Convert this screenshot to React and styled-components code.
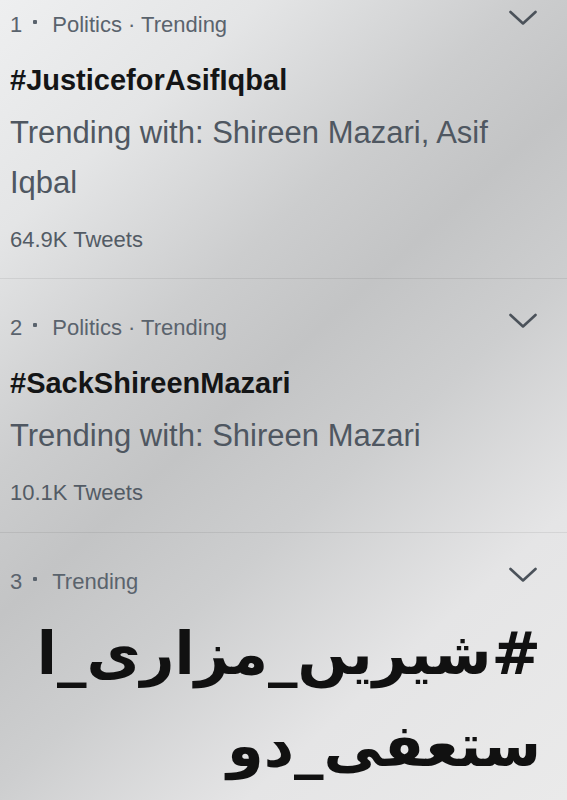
import React from "react";
import styled, { createGlobalStyle } from "styled-components";

const Global = createGlobalStyle`
  html, body { margin: 0; padding: 0; }
  body {
    width: 567px;
    min-height: 800px;
    font-family: "Liberation Sans", Arial, sans-serif;
    background: linear-gradient(138deg, #eeeff0 0%, #e4e5e6 18%, #cccdce 36%, #c3c4c5 47%, #cdcecf 60%, #e5e5e6 78%, #eaeaea 100%);
    background-attachment: fixed;
  }
`;

const Page = styled.div`
  width: 567px;
  height: 800px;
  overflow: hidden;
  display: flex;
  flex-direction: column;
`;

const Row = styled.section`
  display: flex;
  flex-direction: column;
  padding: ${(p) => p.$top}px 30px ${(p) => p.$bottom}px 10px;
  border-bottom: ${(p) => (p.$last ? "none" : "1px solid rgba(0,0,0,0.07)")};
`;

const Header = styled.div`
  display: flex;
  justify-content: space-between;
  align-items: flex-start;
`;

const Meta = styled.div`
  display: flex;
  align-items: center;
  font-size: 22px;
  line-height: 30px;
  color: #5a636d;
`;

const Dot = styled.span`
  display: inline-block;
  width: 4px;
  height: 4px;
  border-radius: 1px;
  background: #5a636d;
  margin: 0 15px 0 11px;
  position: relative;
  top: -3px;
`;

const Chevron = styled.svg`
  width: 28px;
  height: 16px;
  margin-top: 0;
  flex-shrink: 0;
`;

const Title = styled.div`
  margin-top: 20px;
  font-size: 29px;
  line-height: 40px;
  font-weight: 700;
  color: #141516;
`;

const With = styled.div`
  margin-top: 8px;
  padding-right: 20px;
  font-size: 31px;
  line-height: 50px;
  color: #4f5761;
`;

const Count = styled.div`
  margin-top: 17px;
  font-size: 22px;
  line-height: 30px;
  color: #535b65;
`;

const RtlTitle = styled.div`
  direction: rtl;
  text-align: right;
  margin-top: 11px;
  margin-right: -4px;
  font-family: "DejaVu Sans", sans-serif;
  font-size: 59px;
  line-height: 92px;
  font-weight: 700;
  color: #111;
`;

const RtlLine = styled.div``;

function Arrow() {
  return (
    <Chevron viewBox="0 0 28 16">
      <path d="M1.5 2 L14 13.5 L26.5 2" fill="none" stroke="#4b525a" strokeWidth="2.6" strokeLinecap="round" strokeLinejoin="round" />
    </Chevron>
  );
}

function MetaLine({ rank, parts }) {
  return (
    <Meta>
      <span>{rank}</span>
      <Dot />
      <span>{parts}</span>
    </Meta>
  );
}

export default function App() {
  return (
    <Page>
      <Global />
      <Row $top={10} $bottom={23}>
        <Header>
          <MetaLine rank="1" parts="Politics · Trending" />
          <Arrow />
        </Header>
        <Title>#JusticeforAsifIqbal</Title>
        <With>Trending with: Shireen Mazari, Asif Iqbal</With>
        <Count>64.9K Tweets</Count>
      </Row>
      <Row $top={34} $bottom={24}>
        <Header>
          <MetaLine rank="2" parts="Politics · Trending" />
          <Arrow />
        </Header>
        <Title>#SackShireenMazari</Title>
        <With>Trending with: Shireen Mazari</With>
        <Count>10.1K Tweets</Count>
      </Row>
      <Row $top={34} $bottom={0} $last>
        <Header>
          <MetaLine rank="3" parts="Trending" />
          <Arrow />
        </Header>
        <RtlTitle>
          <RtlLine>#شیریں_مزاری_ا</RtlLine>
          <RtlLine>ستعفی_دو</RtlLine>
        </RtlTitle>
      </Row>
    </Page>
  );
}
